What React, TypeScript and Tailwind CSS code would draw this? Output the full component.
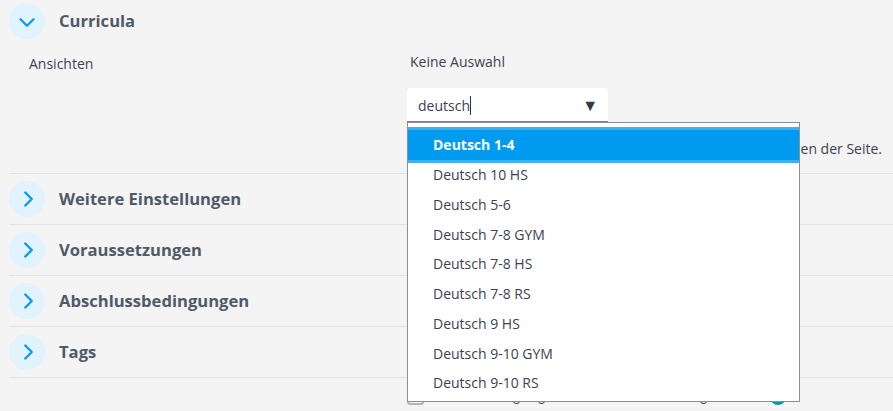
import React from 'react';
import { ChevronDown, ChevronRight } from 'lucide-react';
import clsx from 'clsx';

const sections = ['Weitere Einstellungen', 'Voraussetzungen', 'Abschlussbedingungen', 'Tags'];

const options = [
  'Deutsch 1-4',
  'Deutsch 10 HS',
  'Deutsch 5-6',
  'Deutsch 7-8 GYM',
  'Deutsch 7-8 HS',
  'Deutsch 7-8 RS',
  'Deutsch 9 HS',
  'Deutsch 9-10 GYM',
  'Deutsch 9-10 RS',
];

function SectionHeader({ title, open }: { title: string; open?: boolean }) {
  return (
    <div className="flex items-center h-[36px]">
      <span className="flex items-center justify-center w-[36px] h-[36px] rounded-full bg-[#e1f3ff] text-[#0a9bf0] shrink-0">
        {open ? (
          <ChevronDown size={26} strokeWidth={2.2} className="translate-y-[1.5px]" />
        ) : (
          <ChevronRight size={26} strokeWidth={2.2} className="translate-x-[1.5px]" />
        )}
      </span>
      <span className="ml-[14px] text-[16.6px] font-bold text-[#4f5a69]">{title}</span>
    </div>
  );
}

export default function App() {
  return (
    <div className="relative w-[893px] h-[411px] overflow-hidden bg-[#f4f4f4] font-['Open_Sans',sans-serif] text-[14px] text-[#3b4252]">
      <div className="pl-[9px] pt-[3px]">
        <SectionHeader title="Curricula" open />
        <div className="flex h-[135px] border-b border-[#e2e2e8]">
          <div className="w-[401px] pl-[20px] pt-[15px] leading-[19px]">Ansichten</div>
          <div className="flex-1">
            <div className="pt-[13px] leading-[19px]">Keine Auswahl</div>
            <div className="mt-[17px] -ml-[3px] flex items-center justify-between w-[201px] h-[34px] pt-[1px] bg-white rounded-t-[4px] border-b border-[#2a9ad8] pl-[11px] pr-[10px]">
              <span className="flex items-center">
                deutsch
                <span className="w-px h-[19px] bg-[#333]" />
              </span>
              <span className="text-[#333b4a] text-[16px] leading-none">▼</span>
            </div>
            <div className="flex justify-end pr-[11px] pt-[17px] leading-[19px]">en der Seite.</div>
          </div>
        </div>
        {sections.map((title) => (
          <div key={title} className="h-[51px] pt-[7px] border-b border-[#e2e2e8]">
            <SectionHeader title={title} />
          </div>
        ))}
      </div>
      {/* row under the open dropdown, only its lower edge shows */}
      <span className="absolute left-[407px] top-[390px] w-[17px] h-[15px] rounded-[3px] border-2 border-[#b4b4bc] bg-[#f4f4f4]" />
      <span className="absolute left-[513px] top-[399px] w-[7px] h-[5px] rounded-b-[3px] border border-[#3b4252]" />
      <span className="absolute left-[538px] top-[399px] w-[7px] h-[5px] rounded-b-[3px] border border-[#3b4252]" />
      <span className="absolute left-[700px] top-[399px] w-[7px] h-[5px] rounded-b-[3px] border border-[#3b4252]" />
      <span className="absolute left-[770px] top-[389px] w-[16px] h-[16px] rounded-full bg-[#1a8fb0]" />
      <div className="absolute left-[407px] top-[122px] w-[393px] h-[280px] bg-white border border-[#8d8f98] overflow-hidden pt-[7px]">
        {options.map((option, i) => (
          <div
            key={option}
            className={clsx(
              'relative h-[29.75px] pl-[25px] flex items-center',
              i === 0 && 'bg-[#009bf0] text-white font-bold shadow-[0_0_0_3px_#3fb0ee]'
            )}
          >
            {option}
          </div>
        ))}
      </div>
    </div>
  );
}
